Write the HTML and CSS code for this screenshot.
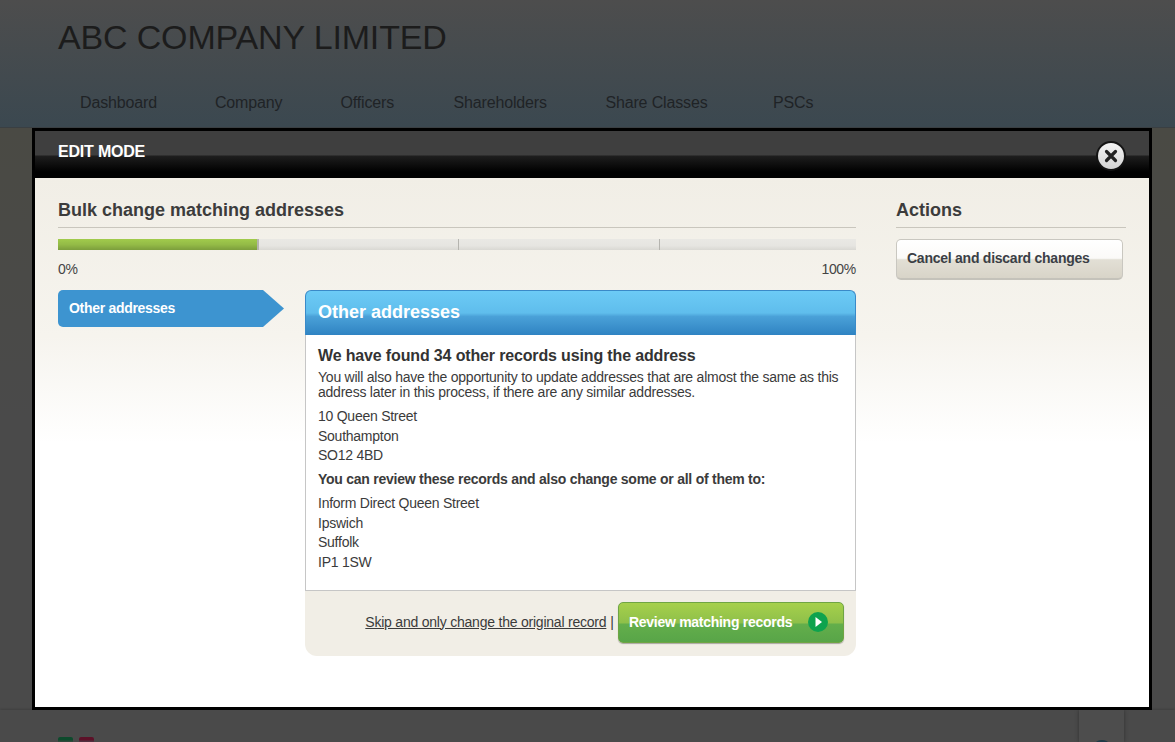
FILE: index.html
```html
<!DOCTYPE html>
<html lang="en">
<head>
    <meta charset="UTF-8">
    <title>ABC Company Limited</title>
    <link rel="stylesheet" href="styles.css">
</head>

<body>
    <header class="site-header">
        <h1 class="company-name">ABC COMPANY LIMITED</h1>
        <nav class="main-nav">
            <a href="#">Dashboard</a>
            <a href="#">Company</a>
            <a href="#">Officers</a>
            <a href="#">Shareholders</a>
            <a href="#">Share Classes</a>
            <a href="#">PSCs</a>
        </nav>
    </header>

    <div class="page-middle"></div>

    <footer class="site-footer">
        <div class="footer-logo">
            <span class="logo-green"></span>
            <span class="logo-red"></span>
        </div>
        <div class="help-tab"><span class="help-dome"></span></div>
    </footer>

    <div class="modal">
        <div class="modal-top">
            <span class="modal-title">EDIT MODE</span>
            <a class="modal-close" href="#" aria-label="Close">
                <svg width="30" height="30" viewBox="0 0 30 30">
                    <defs>
                        <linearGradient id="closeFill" x1="0" y1="0" x2="0" y2="1">
                            <stop offset="0" stop-color="#f4f4f4"/>
                            <stop offset="1" stop-color="#d4d4d4"/>
                        </linearGradient>
                    </defs>
                    <circle cx="15" cy="15" r="14" fill="url(#closeFill)" stroke="#141414" stroke-width="2"/>
                    <path d="M10.5 10.5 L19.5 19.5 M19.5 10.5 L10.5 19.5" stroke="#222222" stroke-width="3.2" stroke-linecap="round"/>
                </svg>
            </a>
        </div>

        <div class="modal-body">
            <main class="wizard">
                <h2 class="section-title">Bulk change matching addresses</h2>

                <div class="progress">
                    <div class="progress-fill"></div>
                    <div class="progress-seg seg-a"></div>
                    <div class="progress-seg seg-a"></div>
                    <div class="progress-seg seg-b"></div>
                    <div class="progress-seg seg-c"></div>
                </div>
                <div class="progress-labels">
                    <span>0%</span>
                    <span>100%</span>
                </div>

                <div class="wizard-row">
                    <div class="step">Other addresses</div>

                    <section class="panel">
                        <h3 class="panel-head">Other addresses</h3>
                        <div class="panel-body">
                            <h4>We have found 34 other records using the address</h4>
                            <p class="intro">You will also have the opportunity to update addresses that are almost the same as this address later in this process, if there are any similar addresses.</p>
                            <p class="address">10 Queen Street<br>Southampton<br>SO12 4BD</p>
                            <p class="review-note">You can review these records and also change some or all of them to:</p>
                            <p class="address new-address">Inform Direct Queen Street<br>Ipswich<br>Suffolk<br>IP1 1SW</p>
                        </div>
                        <div class="panel-foot">
                            <a class="skip-link" href="#">Skip and only change the original record</a>
                            <span class="sep">|</span>
                            <a class="btn-green" href="#">
                                Review matching records
                                <svg width="20" height="20" viewBox="0 0 20 20">
                                    <circle cx="10" cy="10" r="10" fill="#0ea34e"/>
                                    <path d="M7.5 5 L14 10 L7.5 15 Z" fill="#ffffff"/>
                                </svg>
                            </a>
                        </div>
                    </section>
                </div>
            </main>

            <aside class="actions">
                <h2 class="section-title">Actions</h2>
                <a class="btn-cancel" href="#">Cancel and discard changes</a>
            </aside>
        </div>
    </div>
</body>
</html>
```

FILE: styles.css
```css
html, body {
    margin: 0;
    height: 100%;
    overflow: hidden;
}

body {
    font-family: "Liberation Sans", Arial, sans-serif;
    font-size: 14px;
    color: #3b3b3b;
    background: #4a4a4a;
    display: flex;
    flex-direction: column;
}

/* page behind the modal, already dimmed */
.site-header {
    height: 127px;
    padding-left: 58px;
    background: linear-gradient(180deg, #4d4d4d 0%, #3b4850 100%);
    border-bottom: 1px solid #3a3f42;
    color: #1c1c1c;
}

.company-name {
    margin: 0;
    padding-top: 17px;
    font-size: 34px;
    line-height: 41px;
    font-weight: 400;
    letter-spacing: -0.16px;
}

.main-nav {
    display: flex;
    margin-top: 36px;
    padding-left: 22px;
    font-size: 16px;
    line-height: 18px;
    letter-spacing: -0.15px;
}

.main-nav a {
    color: #1f2326;
    text-decoration: none;
    margin-right: 58px;
}

.main-nav a:nth-child(3) {
    margin-right: 59.5px;
}

.main-nav a:nth-child(4) {
    margin-right: 58.5px;
}

.main-nav a:nth-child(5) {
    margin-right: 65.5px;
}

.page-middle {
    height: 583px;
    background: linear-gradient(180deg, #4a4a44 0%, #4a4a4a 50%);
}

.site-footer {
    flex: 1;
    position: relative;
    background: #4a4a4a;
    box-shadow: 0 -1px 2px rgba(0, 0, 0, 0.15);
    padding-left: 58px;
}

.footer-logo {
    display: flex;
    gap: 6px;
    padding-top: 27px;
}

.footer-logo span {
    display: block;
    width: 15px;
    height: 5px;
    border-radius: 2px 2px 0 0;
}

.logo-green {
    background: linear-gradient(180deg, #0d4a2c 0, #0d4a2c 3px, #2f4a3c 4px);
}

.logo-red {
    background: linear-gradient(180deg, #5c1128 0, #5c1128 3px, #523040 4px);
}

.help-tab {
    position: absolute;
    top: 0;
    right: 51px;
    width: 45px;
    height: 32px;
    background: #4d4d4d;
    box-shadow: 0 0 4px rgba(0, 0, 0, 0.35);
}

.help-dome {
    position: absolute;
    left: 16px;
    top: 30px;
    width: 14px;
    height: 8px;
    border-radius: 50%;
    background: #1f3a47;
}

/* modal */
.modal {
    position: fixed;
    left: 32px;
    top: 128px;
    width: 1114px;
    height: 576px;
    border: 3px solid #000;
    display: flex;
    flex-direction: column;
    background: #fff;
}

.modal-top {
    position: relative;
    height: 47px;
    flex: none;
    background: linear-gradient(180deg, #3f3f3f 0, #3f3f3f 24px, #1e1e1e 25px, #000 41px, #000 47px);
}

.modal-title {
    display: block;
    padding: 12px 0 0 23px;
    color: #fff;
    font-size: 16px;
    line-height: 18px;
    font-weight: 700;
    letter-spacing: -0.2px;
}

.modal-close {
    position: absolute;
    right: 23px;
    top: 10px;
    width: 30px;
    height: 30px;
}

.modal-body {
    flex: 1;
    display: flex;
    gap: 40px;
    padding: 0 23px;
    background: linear-gradient(180deg, #f1eee6 0%, #f6f4ee 30%, #ffffff 50%);
}

.wizard {
    width: 798px;
}

.actions {
    width: 230px;
}

.section-title {
    margin: 0;
    padding: 22px 0 7px;
    font-size: 18px;
    line-height: 20px;
    font-weight: 700;
    color: #3c3c3c;
    border-bottom: 1px solid #c9c6bd;
}

/* progress bar */
.progress {
    position: relative;
    display: flex;
    height: 11px;
    margin-top: 11px;
    background: linear-gradient(180deg, #e9e8e4 0%, #e6e5e1 60%, #d9d8d3 100%);
}

.progress-fill {
    position: absolute;
    left: 0;
    top: 0;
    width: 199px;
    height: 11px;
    border-right: 1px solid #b5b4af;
    background: linear-gradient(180deg, #a1cb4c 0%, #94bb47 50%, #7c9e3c 100%);
}

.progress-seg {
    box-sizing: border-box;
    border-right: 1px solid #b5b4af;
}

.seg-a {
    width: 200.5px;
}

.seg-b {
    width: 201px;
}

.seg-c {
    flex: 1;
    border-right: none;
}

.progress-labels {
    display: flex;
    justify-content: space-between;
    margin-top: 11px;
    font-size: 14px;
    line-height: 16px;
    letter-spacing: -0.3px;
    color: #444;
}

.wizard-row {
    display: flex;
    align-items: flex-start;
    justify-content: space-between;
    margin-top: 13px;
}

.step {
    width: 226px;
    height: 37px;
    box-sizing: border-box;
    padding: 10px 0 0 11px;
    font-size: 14px;
    line-height: 16px;
    font-weight: 700;
    letter-spacing: -0.3px;
    color: #fff;
    background: #3d94d0;
    border-radius: 5px 0 0 5px;
    clip-path: polygon(0 0, 205px 0, 100% 50%, 205px 100%, 0 100%);
}

/* main panel */
.panel {
    width: 551px;
    background: #f1eee6;
    border-radius: 6px 6px 12px 12px;
}

.panel-head {
    margin: 0;
    height: 45px;
    box-sizing: border-box;
    padding: 10px 0 0 12px;
    font-size: 18px;
    line-height: 22px;
    font-weight: 700;
    color: #fff;
    background: linear-gradient(180deg, #6ccbf6 0%, #5fbdec 50%, #4aa1d8 58%, #2f83c2 100%);
    border: 1px solid #3a8ac8;
    border-bottom: none;
    border-radius: 6px 6px 0 0;
}

.panel-body {
    height: 256px;
    box-sizing: border-box;
    padding: 12px 12px 0;
    background: #fff;
    border: 1px solid #c6c6c6;
    border-top: none;
    letter-spacing: -0.25px;
}

.panel-body h4 {
    margin: 0;
    font-size: 16px;
    line-height: 18px;
    font-weight: 700;
    letter-spacing: -0.15px;
    color: #333;
}

.panel-body p {
    margin: 0;
}

.panel-body .intro {
    padding-top: 5px;
    line-height: 15px;
    letter-spacing: -0.23px;
}

.panel-body .address {
    margin-top: 7px;
    line-height: 19.6px;
}

.panel-body .review-note {
    margin-top: 4px;
    font-weight: 700;
    line-height: 18px;
}

.panel-body .new-address {
    margin-top: 6.5px;
}

.panel-foot {
    display: flex;
    align-items: center;
    justify-content: flex-end;
    height: 65px;
    box-sizing: border-box;
    padding: 0 12px 2px 0;
}

.skip-link {
    color: #3b3b3b;
    text-decoration: underline;
    letter-spacing: -0.22px;
    margin-bottom: 2px;
}

.sep {
    margin: 0 4px 2px 4px;
}

.btn-green {
    display: flex;
    align-items: center;
    justify-content: space-between;
    width: 226px;
    height: 41px;
    box-sizing: border-box;
    padding: 0 15px 1px 10px;
    font-size: 14px;
    font-weight: 700;
    letter-spacing: -0.28px;
    color: #fff;
    text-decoration: none;
    background: linear-gradient(180deg, #a6d04b 0%, #8fc04a 50%, #63ae4b 55%, #58a548 100%);
    border: 1px solid #6fa544;
    border-radius: 5px;
    box-shadow: 0 1px 1px rgba(0, 0, 0, 0.3);
}

.btn-cancel {
    display: block;
    width: 227px;
    height: 41px;
    margin-top: 11px;
    box-sizing: border-box;
    padding: 10px 0 0 10px;
    font-size: 14px;
    line-height: 16px;
    font-weight: 700;
    letter-spacing: -0.25px;
    color: #3b3f46;
    text-decoration: none;
    background: linear-gradient(180deg, #ffffff 0%, #fbfaf8 48%, #e2dfd5 52%, #d8d4c8 100%);
    border: 1px solid #c9c7c0;
    border-bottom: 2px solid #c4c2ba;
    border-radius: 5px;
}
```
